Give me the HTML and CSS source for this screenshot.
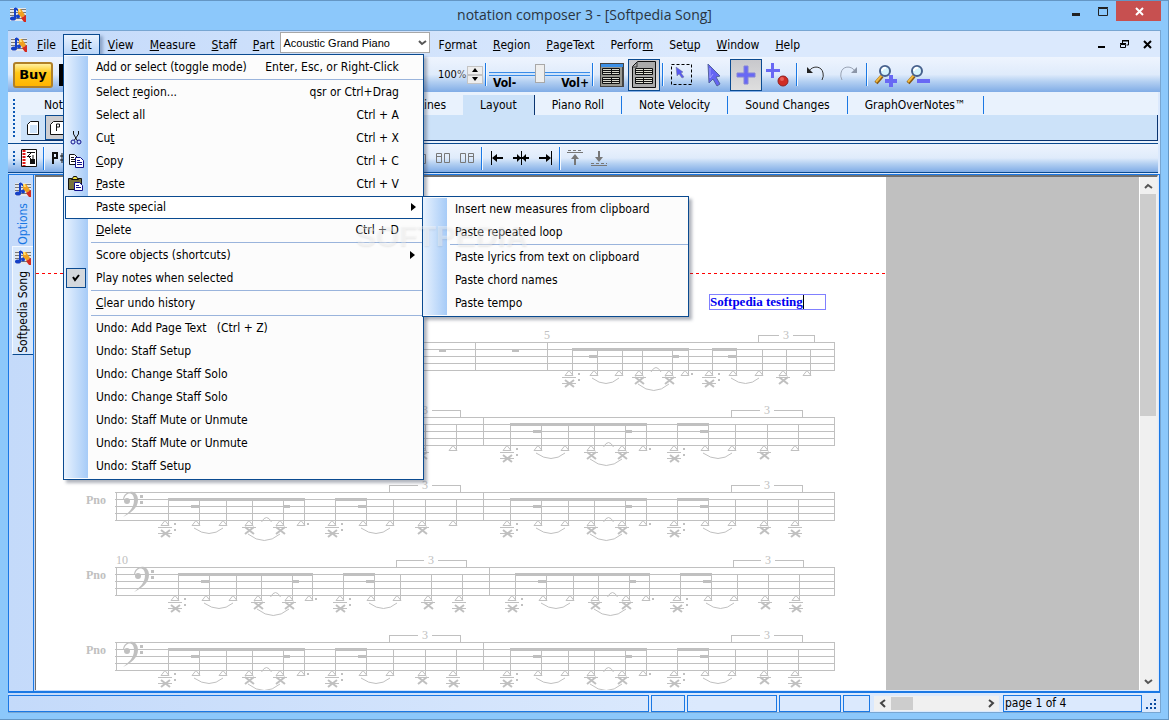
FILE: index.html
```html
<!DOCTYPE html>
<html lang="en">
  <head>
    <meta charset="UTF-8" />
    <meta name="viewport" content="width=device-width, initial-scale=1.0" />
    <title>notation composer 3 - [Softpedia Song]</title>
    <link rel="stylesheet" href="styles.css">
  </head>
  <body>
    <svg class="defs" width="0" height="0" aria-hidden="true">
      <defs>
        <symbol id="app-icon" viewBox="0 0 16 16">
          <rect width="16" height="13" y="1" fill="#e4e6ea" />
          <path d="M0 2.5h16M0 5.5h16M0 8.5h16M0 11.5h16" stroke="#777" />
          <path d="M5 1v10M5 1l4 3v5" stroke="#1440c8" stroke-width="2" fill="none" />
          <ellipse cx="3" cy="11.500" rx="3" ry="2" fill="#1440c8" />
          <ellipse cx="8" cy="9.500" rx="2" ry="2" fill="#1440c8" />
          <path d="M8 2l3 0 4 6-3 3-4-4z" fill="#f0a020" />
          <path d="M8 2l2 0 1 3-2 0z" fill="#ffe070" />
          <path d="M11 11l5-3v7h-2z" fill="#d42a20" />
        </symbol>
        <symbol id="lens" viewBox="0 0 24 24">
          <path d="M2 20l6-7" stroke="#8a5a10" stroke-width="4" />
          <path d="M2 19l6-7" stroke="#f0b840" stroke-width="2" />
          <circle cx="11" cy="8" r="5" fill="#d4f2fc" stroke="#46608c" stroke-width="2" />
          <path d="M8 8a3 3 0 0 1 4-3" stroke="#fff" stroke-width="2" fill="none" />
        </symbol>
      </defs>
    </svg>

    <header class="title-bar">
      <svg class="app-icon" width="16" height="16"><use href="#app-icon" /></svg>
      <h1>notation composer 3 - [Softpedia Song]</h1>
      <div class="window-buttons">
        <button type="button" aria-label="Minimize"><svg width="12" height="12"><path d="M2 8h8v3h-8z" fill="#222" /></svg></button>
        <button type="button" aria-label="Maximize"><svg width="12" height="12"><path d="M1.500 3.500h9v7h-9zM1 2.500h10" fill="none" stroke="#222" /></svg></button>
        <button type="button" class="close" aria-label="Close"><svg width="12" height="12"><path d="M3 3l7 7M10 3l-7 7" stroke="#fff" stroke-width="2" /></svg></button>
      </div>
    </header>

    <div class="window">
      <nav class="menu-bar">
        <svg class="song-icon" width="16" height="16"><use href="#app-icon" /></svg>
        <button type="button" class="menu-title"><u>F</u>ile</button>
        <div class="menu-holder edit-holder">
          <button type="button" class="menu-title open"><u>E</u>dit</button>
          <div class="menu edit-menu">
            <button type="button" class="item"><span>Add or select (toggle mode)</span><kbd>Enter, Esc, or Right-Click</kbd></button>
            <hr />
            <button type="button" class="item"><span>Select <u>r</u>egion...</span><kbd>qsr or Ctrl+Drag</kbd></button>
            <button type="button" class="item"><span>Select all</span><kbd>Ctrl + A</kbd></button>
            <button type="button" class="item">
              <svg width="16" height="16" fill="none" stroke="#111"><path d="M5.500 1v3l4 7M10.500 1v3l-4 6" /><circle cx="5" cy="12" r="2" stroke="#10108c" /><circle cx="11" cy="12" r="2" stroke="#10108c" /></svg>
              <span>Cu<u>t</u></span><kbd>Ctrl + X</kbd>
            </button>
            <button type="button" class="item">
              <svg width="16" height="16" fill="#fff"><path d="M1.500 1.500h5l3 3v7h-8z" stroke="#111" /><path d="M3 4.500h3M3 6.500h5M3 8.500h5" stroke="#111" /><path d="M7.500 4.500h5l3 3v7h-8z" stroke="#10108c" /><path d="M9 7.500h3M9 9.500h5M9 11.500h5" stroke="#10108c" /></svg>
              <span><u>C</u>opy</span><kbd>Ctrl + C</kbd>
            </button>
            <button type="button" class="item">
              <svg width="16" height="16"><path d="M.5 2.500h13v11h-13z" fill="#77733c" stroke="#111" /><path d="M3.500 3.500h7v-1h-1l-1-2h-3l-1 2h-1z" fill="#f0e040" stroke="#111" /><path d="M6.500 6.500h5l3 3v5h-8z" fill="#fff" stroke="#10108c" /><path d="M8 9.500h3M8 11.500h5" stroke="#10108c" /></svg>
              <span><u>P</u>aste</span><kbd>Ctrl + V</kbd>
            </button>
            <div class="menu-holder">
              <button type="button" class="item selected"><span>Paste special</span><i class="arrow"></i></button>
              <div class="menu submenu">
                <button type="button" class="item"><span>Insert new measures from clipboard</span></button>
                <button type="button" class="item"><span>Paste repeated loop</span></button>
                <hr />
                <button type="button" class="item"><span>Paste lyrics from text on clipboard</span></button>
                <button type="button" class="item"><span>Paste chord names</span></button>
                <button type="button" class="item"><span>Paste tempo</span></button>
              </div>
            </div>
            <button type="button" class="item"><span><u>D</u>elete</span><kbd>Ctrl + D</kbd></button>
            <hr />
            <button type="button" class="item"><span>Score objects (shortcuts)</span><i class="arrow"></i></button>
            <button type="button" class="item">
              <svg width="20" height="20"><rect x=".5" y=".5" width="19" height="19" fill="#d4d8dd" stroke="#0a4a90" /><path d="M7 9l2 3 4-5" fill="none" stroke="#000" stroke-width="2" /></svg>
              <span>Play notes when selected</span>
            </button>
            <hr />
            <button type="button" class="item"><span><u>C</u>lear undo history</span></button>
            <hr />
            <button type="button" class="item"><span>Undo: Add Page Text &nbsp; (Ctrl + Z)</span></button>
            <button type="button" class="item"><span>Undo: Staff Setup</span></button>
            <button type="button" class="item"><span>Undo: Change Staff Solo</span></button>
            <button type="button" class="item"><span>Undo: Change Staff Solo</span></button>
            <button type="button" class="item"><span>Undo: Staff Mute or Unmute</span></button>
            <button type="button" class="item"><span>Undo: Staff Mute or Unmute</span></button>
            <button type="button" class="item"><span>Undo: Staff Setup</span></button>
            <div class="watermark">SOFTPEDIA<sup>®</sup></div>
          </div>
        </div>
        <button type="button" class="menu-title"><u>V</u>iew</button>
        <button type="button" class="menu-title"><u>M</u>easure</button>
        <button type="button" class="menu-title"><u>S</u>taff</button>
        <button type="button" class="menu-title"><u>P</u>art</button>
        <div class="part-picker">
          <select aria-label="Part">
            <option>Acoustic Grand Piano</option>
          </select>
          <svg width="9" height="8"><path d="M1 2l3 3 4-3" fill="none" stroke="#555" stroke-width="2" /></svg>
        </div>
        <button type="button" class="menu-title">F<u>o</u>rmat</button>
        <button type="button" class="menu-title"><u>R</u>egion</button>
        <button type="button" class="menu-title"><u>P</u>ageText</button>
        <button type="button" class="menu-title">Perfor<u>m</u></button>
        <button type="button" class="menu-title">Set<u>u</u>p</button>
        <button type="button" class="menu-title"><u>W</u>indow</button>
        <button type="button" class="menu-title"><u>H</u>elp</button>
        <div class="song-buttons">
          <button type="button" aria-label="Minimize song"><svg width="9" height="9"><path d="M1 6h7v2h-7z" /></svg></button>
          <button type="button" aria-label="Restore song"><svg width="9" height="9" fill="none" stroke="#000"><path d="M.5 4.500h5v3h-5zM0 3.500h6M2.500 3v-2h6v4h-2M2 .5h7" /></svg></button>
          <button type="button" aria-label="Close song"><svg width="9" height="9"><path d="M1 1l7 7M8 1l-7 7" stroke="#000" stroke-width="2" /></svg></button>
        </div>
      </nav>

      <div class="toolbar">
        <div class="toolbar-start">
          <button type="button" class="buy">Buy</button>
          <output class="display"></output>
        </div>
        <span class="zoom-level">100<small>%</small></span>
        <div class="spinner">
          <button type="button" aria-label="Zoom up"><svg width="8" height="4"><path d="M1 4l3-4 3 4z" /></svg></button>
          <button type="button" aria-label="Zoom down"><svg width="8" height="4"><path d="M1 0l3 4 3-4z" /></svg></button>
        </div>
        <i class="sep"></i>
        <div class="volume">
          <input type="range" min="0" max="100" value="50" aria-label="Volume" />
          <div class="volume-labels"><span>Vol-</span><span>Vol+</span></div>
        </div>
        <i class="sep"></i>
        <button type="button" class="tool" aria-label="Scroll view"><svg width="24" height="24"><rect width="24" height="24" fill="#444" /><rect x="1" y="1" width="22" height="3" fill="#3b8fe6" /><rect x="1" y="4" width="21" height="19" fill="#989890" /><path d="M2.500 5.500h17v6h-17zM2.500 14.500h17v6h-17z" fill="#d8d8cc" stroke="#111" /><path d="M2 7.500h18M2 9.500h18M2 16.500h18M2 18.500h18M11.500 5v7M11.500 14v7" stroke="#111" /></svg></button>
        <button type="button" class="tool pressed" aria-label="Page view"><svg width="24" height="28"><path d="M.5 5.500l5-5h18v26h-23z" fill="#aaa" stroke="#111" /><path d="M1 6h4v-5" fill="none" stroke="#333" /><path d="M3.500 7.500h17v6h-17zM3.500 16.500h17v6h-17z" fill="#e0e0d4" stroke="#111" /><path d="M3 9.500h18M3 11.500h18M3 18.500h18M3 20.500h18M11.500 7v7M11.500 16v7" stroke="#111" /></svg></button>
        <i class="sep"></i>
        <button type="button" class="tool" aria-label="Select region"><svg width="22" height="22"><rect x=".5" y=".5" width="20" height="20" fill="none" stroke="#000" stroke-dasharray="3 2" /><path d="M5 3l7 5-2 1 3 4-2 1-3-4-2 2z" fill="#5858f0" stroke="#6e7890" stroke-width=".5" /></svg></button>
        <button type="button" class="tool" aria-label="Select"><svg width="16" height="24"><path d="M2 1l12 12-4 1 4 7-3 2-4-7-4 4z" fill="#6464f4" stroke="#5262a0" /><path d="M4 5v10l3-4" fill="none" stroke="#a0a0ff" /></svg></button>
        <button type="button" class="tool pressed" aria-label="Add"><svg width="20" height="20"><path d="M8 1h4v7h7v4h-7v7h-4v-7h-7v-4h7z" fill="#6868f4" stroke="#8484d8" /></svg></button>
        <button type="button" class="tool" aria-label="Add and record"><svg width="24" height="24"><path d="M5 0h3v6h6v3h-6v6h-3v-6h-6v-3h6z" fill="#6868f4" /><circle cx="17" cy="18" r="5" fill="#d02c24" stroke="#902020" /><circle cx="16" cy="16" r="2" fill="#e86058" /></svg></button>
        <i class="sep"></i>
        <button type="button" class="tool" aria-label="Undo"><svg width="20" height="20" fill="none" stroke="#333"><path d="M3 6c4-6 13-5 14 2q1 3-1 7" /><path d="M1 2v6h6z" fill="#222" stroke="none" /></svg></button>
        <button type="button" class="tool" aria-label="Redo"><svg width="20" height="20" fill="none" stroke="#99a3b4"><path d="M17 6c-4-6-13-5-14 2q-1 3 1 7" /><path d="M19 2v6h-6z" fill="#8c96a8" stroke="none" /></svg></button>
        <i class="sep"></i>
        <button type="button" class="tool" aria-label="Zoom in"><svg width="24" height="24"><use href="#lens" /><path d="M15 12h4v4h4v4h-4v4h-4v-4h-4v-4h4z" fill="#6868f4" /></svg></button>
        <button type="button" class="tool" aria-label="Zoom out"><svg width="24" height="24"><use href="#lens" /><path d="M11 16h13v4h-13z" fill="#6868f4" /></svg></button>
      </div>

      <div class="palette">
        <i class="grip"></i>
        <div class="palette-body">
          <div class="tabs">
            <div class="tabs-start">
              <button type="button" class="tab">Notes</button>
              <button type="button" class="tab">Lines</button>
            </div>
            <button type="button" class="tab active">Layout</button>
            <button type="button" class="tab">Piano Roll</button>
            <button type="button" class="tab">Note Velocity</button>
            <button type="button" class="tab">Sound Changes</button>
            <button type="button" class="tab">GraphOverNotes™</button>
          </div>
          <div class="tab-panel">
            <button type="button" class="page-tool" aria-label="Page layout"><svg width="14" height="16"><path d="M1.500 4.500l3-3h8v13h-11z" fill="#fff" stroke="#111" /><path d="M4 5h7v8h-7z" fill="#cfe4fa" /></svg></button>
            <button type="button" class="page-tool pressed" aria-label="Page text"><svg width="14" height="16"><path d="M.5 4.500l3-3h10v13h-13z" fill="#fff" stroke="#111" /><path d="M6.500 11v-7h3v3h-3" fill="none" stroke="#111" /></svg></button>
          </div>
        </div>
      </div>

      <div class="toolbar format-bar">
        <i class="grip"></i>
        <div class="format-start">
          <button type="button" aria-label="Score setup"><svg width="16" height="18"><path d="M.5.5h15v17h-15z" fill="#fff" stroke="#111" /><path d="M3 1v16" stroke="#e01818" stroke-width="3" stroke-dasharray="2 1" /><path d="M6 3.500h8M6 7.500h4M12 6v4M7 7l3-3M7 7l3 3" stroke="#111" fill="none" /><path d="M9 10h5v5h-5z" fill="#111" /></svg></button>
          <i class="sep"></i>
          <button type="button" aria-label="Sharps"><svg width="16" height="14" fill="none" stroke="#111"><path d="M2 13v-11h4v5h-4" stroke-width="2" /><path d="M9 5h6M9 9h6M11 2v10M14 2v10" /></svg></button>
        </div>
        <button type="button" class="small-tool" aria-label="Join"><svg width="16" height="14" fill="none" stroke="#777"><path d="M1.500 1.500h5v11h-5zM9.500 3.500h5v9h-5z" /></svg></button>
        <button type="button" class="small-tool" aria-label="Break left"><svg width="16" height="14" fill="none" stroke="#777"><path d="M1.500 2.500h5v9h-5zM1 5.500h6M9.500 2.500h5v9h-5z" /></svg></button>
        <button type="button" class="small-tool" aria-label="Break right"><svg width="16" height="14" fill="none" stroke="#777"><path d="M1.500 2.500h5v9h-5zM9.500 2.500h5v9h-5zM9 5.500h6" /></svg></button>
        <i class="sep"></i>
        <button type="button" class="small-tool" aria-label="Move left"><svg width="16" height="16"><path d="M2.500 1v14" stroke="#000" /><path d="M4 8h10" stroke="#000" stroke-width="2" /><path d="M3 8l5-4v8z" /></svg></button>
        <button type="button" class="small-tool" aria-label="Center"><svg width="16" height="16"><path d="M0 8h16" stroke="#000" stroke-width="2" /><path d="M8.500 1v14" stroke="#000" /><path d="M8 8l-4-4v8zM9 8l4-4v8z" /></svg></button>
        <button type="button" class="small-tool" aria-label="Move right"><svg width="16" height="16"><path d="M14.500 1v14" stroke="#000" /><path d="M2 8h10" stroke="#000" stroke-width="2" /><path d="M14 8l-5-4v8z" /></svg></button>
        <i class="sep"></i>
        <button type="button" class="small-tool" aria-label="Move up"><svg width="16" height="16" fill="#777" stroke="#777"><path d="M8 6v9" stroke-width="2" /><path d="M8 4l4 5h-8z" stroke="none" /><path d="M0 2.500h16" /><path d="M1 .5h14" stroke-dasharray="3 2" /></svg></button>
        <button type="button" class="small-tool" aria-label="Move down"><svg width="16" height="16" fill="#777" stroke="#777"><path d="M8 1v9" stroke-width="2" /><path d="M8 12l4-5h-8z" stroke="none" /><path d="M0 15.500h16" /><path d="M0 13.500h16" stroke-dasharray="3 2" /></svg></button>
      </div>

      <main class="workspace">
        <div class="side-tabs">
          <button type="button" class="side-tab"><svg width="16" height="16"><use href="#app-icon" /></svg><span>Options</span></button>
          <button type="button" class="side-tab active"><svg width="16" height="16"><use href="#app-icon" /></svg><span>Softpedia Song</span></button>
        </div>
        <div class="score-view">
          <div class="page">
            <svg id="score" width="850" height="560"></svg>
            <div class="page-text">
              <input type="text" value="Softpedia testing" aria-label="Page text" />
              <i class="caret"></i>
            </div>
          </div>
          <div class="v-scroll">
            <button type="button" aria-label="Scroll up"><svg width="9" height="8"><path d="M1 6l3-3 4 3" fill="none" stroke="#555" stroke-width="2" /></svg></button>
            <i class="thumb"></i>
            <button type="button" aria-label="Scroll down"><svg width="9" height="8"><path d="M1 2l3 3 4-3" fill="none" stroke="#555" stroke-width="2" /></svg></button>
          </div>
        </div>
      </main>

      <footer class="status-bar">
        <div class="cell message"></div>
        <div class="cell cell-s"></div>
        <div class="cell cell-l"></div>
        <div class="cell cell-m"></div>
        <div class="cell cell-xs"></div>
        <div class="h-scroll">
          <button type="button" aria-label="Previous page"><svg width="8" height="9"><path d="M6 1l-4 3 4 4" fill="none" stroke="#444" stroke-width="2" /></svg></button>
          <i class="thumb"></i>
          <button type="button" aria-label="Next page"><svg width="8" height="9"><path d="M2 1l4 3-4 4" fill="none" stroke="#444" stroke-width="2" /></svg></button>
        </div>
        <div class="cell page-number">page 1 of 4</div>
        <svg class="size-grip" width="12" height="12" fill="#0a4aa0"><path d="M8 0h2v2h-2zM4 4h2v2h-2zM8 4h2v2h-2zM0 8h2v2h-2zM4 8h2v2h-2zM8 8h2v2h-2z" /></svg>
      </footer>
    </div>
    <script src="score.js"></script>
  </body>
</html>
```
FILE: styles.css
```css
* {
  box-sizing: border-box;
}

body {
  margin: 0;
  height: 100vh;
  display: flex;
  flex-direction: column;
  padding: 0 7px 6px 8px;
  overflow: hidden;
  background: #8cc8fb;
  border: 1px solid #6496c4;
  border-width: 1px 1px 1px 0;
  font-family: "DejaVu Sans Condensed", "DejaVu Sans", sans-serif;
  font-size: 12px;
  line-height: 16px;
  color: #000;
}

button {
  margin: 0;
  padding: 0;
  border: none;
  background: none;
  font: inherit;
  color: inherit;
  text-align: left;
  display: flex;
  align-items: center;
  justify-content: center;
}

svg {
  flex: none;
  display: block;
}

.defs {
  position: absolute;
}

/* title bar */
.title-bar {
  flex: none;
  height: 29px;
  display: grid;
  grid-template-columns: 1fr auto 1fr;
}

.app-icon {
  margin: 6px 2px;
}

.title-bar h1 {
  margin: 0;
  font: 14px/28px "Open Sans", sans-serif;
  color: #2a3440;
}

.window-buttons {
  display: flex;
  justify-content: flex-end;
  height: 20px;
}

.window-buttons button {
  width: 27px;
}

.window-buttons .close {
  width: 45px;
  background: #c75050;
}

.window {
  flex: 1;
  min-height: 0;
  display: flex;
  flex-direction: column;
  border: 1px solid #78a6d2;
  border-left: none;
  background: linear-gradient(to right, #c4dafa, #dbe9fd 60%);
}

/* menu bar */
.menu-bar {
  flex: none;
  height: 26px;
  display: flex;
  align-items: center;
  padding-top: 1px;
}

.song-icon {
  margin: 0 2px 0 3px;
}

.menu-title {
  height: 22px;
  padding: 0 8px;
}

.menu-title.open {
  padding: 0 7px;
  border: 1px solid #0a4a90;
  border-bottom: none;
  background: linear-gradient(#e8f2fe, #b4d2f8);
  box-shadow: 3px 2px 3px #8fa6c8;
}

.menu-holder {
  position: relative;
}

.edit-holder {
  margin-left: -1px;
}

.part-picker {
  display: grid;
  align-items: center;
  width: 150px;
  height: 21px;
  margin-left: -2px;
  margin-bottom: 4px;
}

.part-picker select,
.part-picker svg {
  grid-area: 1 / 1;
}

.part-picker select {
  appearance: none;
  width: 100%;
  height: 21px;
  padding: 0 2px;
  border: 1px solid #a8a8a8;
  border-radius: 0;
  background: #fff;
  font: 11px "Liberation Sans", sans-serif;
  color: #000;
}

.part-picker svg {
  justify-self: end;
  margin-right: 3px;
}

.song-buttons {
  display: flex;
  gap: 14px;
  margin-left: auto;
  padding-right: 8px;
}

/* drop down menus */
.menu {
  position: absolute;
  z-index: 10;
  padding: 1px 0;
  border: 1px solid #0a4a90;
  background: linear-gradient(to right, #e8f2fe, #a6cbf7) no-repeat 0 1px / 24px calc(100% - 2px) #fcfcfc;
  box-shadow: 3px 3px 3px rgba(60, 70, 90, 0.4);
}

.edit-menu {
  top: 20px;
  left: 0;
  width: 361px;
}

.submenu {
  top: 0;
  left: calc(100% - 1px);
  width: 267px;
}

.menu hr {
  height: 1px;
  margin: 0 0 1px 27px;
  border: none;
  background: #9ab4dc;
}

.item {
  display: grid;
  grid-template-columns: 24px 1fr auto;
  width: 100%;
  height: 23px;
  padding-right: 24px;
}

.item svg {
  grid-column: 1;
  grid-row: 1;
  justify-self: center;
}

.item span {
  grid-column: 2;
  grid-row: 1;
  padding-left: 8px;
  white-space: nowrap;
}

.item kbd {
  grid-column: 3;
  grid-row: 1;
  font: inherit;
}

.submenu .item {
  padding-right: 0;
}

.item.selected {
  border: 1px solid #0a4a90;
  background: #fff;
  width: calc(100% - 1px);
  margin-left: 1px;
  padding-right: 22px;
  grid-template-columns: 22px 1fr auto;
}

.arrow {
  grid-column: 3;
  grid-row: 1;
  width: 0;
  margin: 0 -16px 0 11px;
  border: 4px solid transparent;
  border-left: 5px solid #000;
  border-right: none;
}

.watermark {
  position: absolute;
  z-index: 11;
  top: 160px;
  left: 292px;
  font: bold 30px/34px "Liberation Sans", sans-serif;
  color: rgba(255, 255, 255, 0.4);
  text-shadow: 0 1px 2px rgba(0, 0, 0, 0.08);
  pointer-events: none;
}

.watermark sup {
  font-size: 9px;
}

/* toolbars */
.toolbar {
  flex: none;
  height: 35px;
  display: flex;
  align-items: center;
  background: linear-gradient(#eef4fe, #dfebfb 50%, #b4d0f2 70%, #80ace6);
}

.toolbar-start {
  display: flex;
  align-items: center;
  gap: 6px;
  width: 430px;
  padding-left: 5px;
}

.buy {
  width: 40px;
  height: 26px;
  border: 2px solid #b08028;
  border-radius: 3px;
  background: linear-gradient(#fff0a0, #ffc818 40%, #ffb400);
  font: bold 13px/16px "DejaVu Sans", sans-serif;
}

.display {
  width: 120px;
  height: 22px;
  background: #000;
}

.zoom-level {
  width: 29px;
  font-size: 11px;
}

.zoom-level small {
  font-size: 11px;
  color: #555;
}

.spinner button {
  width: 16px;
  height: 9px;
  border: 1px solid #c4c4c4;
  background: #eee;
}

.sep {
  flex: none;
  width: 6px;
  height: 23px;
  background: linear-gradient(to right, transparent 2px, #1a78e4 2px 3px, #f4f9ff 3px 4px, transparent 4px);
}

.volume {
  display: grid;
  width: 101px;
  height: 32px;
}

.volume input,
.volume-labels {
  grid-area: 1 / 1;
}

.volume input {
  appearance: none;
  width: 100%;
  height: 20px;
  margin: 5px 0 0;
  background: linear-gradient(#3a8ce8, #3a8ce8 1px, #cfe4fb 1px, #cfe4fb 3px, #3a8ce8 3px) no-repeat center / 100% 4px;
}

.volume input::-webkit-slider-thumb {
  appearance: none;
  width: 10px;
  height: 19px;
  border: 1px solid #a8a8a8;
  border-radius: 0;
  background: #eee;
}

.volume-labels {
  display: flex;
  justify-content: space-between;
  align-items: flex-end;
  padding: 0 1px 0 4px;
  font-weight: bold;
  pointer-events: none;
}

.tool {
  width: 32px;
  height: 32px;
}

.tool.pressed {
  border: 1px solid #0a4a90;
  background: linear-gradient(#c8c8cc, #dedede);
}

/* palette with tabs */
.palette {
  flex: none;
  display: flex;
  height: 52px;
  margin-right: 2px;
  padding: 3px 0 2px;
  background: #e9f2fd;
  border-bottom: 1px solid #0a4a90;
}

.grip {
  width: 2px;
  margin: 4px 6px 4px 5px;
  background: repeating-linear-gradient(#0c58b4 0 2px, transparent 2px 4px);
}

.palette-body {
  flex: 1;
  display: flex;
  flex-direction: column;
}

.tabs {
  display: flex;
  height: 20px;
}

.tabs-start {
  display: flex;
  justify-content: space-between;
  width: 442px;
  padding-left: 6px;
}

.tab {
  padding: 0 17px;
  height: 20px;
  border: solid transparent;
  border-width: 0 1px 0 0;
  border-image: linear-gradient(transparent 2px, #1a78e4 2px 18px, transparent 18px) 1;
}

.tabs-start .tab {
  border: none;
}

.tab.active {
  background: #cce2f9;
  border-image: none;
  border-right: 1px solid #0a3470;
}

.tab-panel {
  flex: 1;
  display: flex;
  background: #cce2f9;
  border: 1px solid #0a3470;
  border-width: 0 1px 1px 0;
}

.page-tool {
  width: 24px;
  height: 25px;
}

.page-tool.pressed {
  border: 1px solid #0a4a90;
  background: #cdcdd0;
}

.format-bar {
  height: 29px;
  margin-right: 2px;
  border-bottom: 1px solid #0a4a90;
}

.format-bar .grip {
  height: 14px;
}

.format-start {
  display: flex;
  align-items: center;
  gap: 4px;
  width: 386px;
}

.small-tool {
  width: 24px;
  height: 24px;
}

/* workspace */
.workspace {
  flex: 1;
  min-height: 0;
  display: flex;
  margin-top: 1px;
  border: 1px solid #1a78e4;
  border-bottom-width: 2px;
}

.side-tabs {
  width: 25px;
  padding: 4px 0 0 3px;
  border-right: 1px solid #1a78e4;
}

.side-tab {
  flex-direction: column;
  gap: 5px;
  width: 21px;
  padding: 3px 0 1px;
  color: #1a78e4;
}

.side-tab.active {
  background: #d8e8fc;
  border: 1px solid #f4f9ff;
  border-bottom-color: #0a4a90;
  border-right: none;
  color: #000;
}

.side-tab span {
  writing-mode: vertical-rl;
  transform: rotate(180deg);
}

.score-view {
  flex: 1;
  display: flex;
  min-width: 0;
  margin: 0 1px 1px;
  border: 2px solid #707070;
  border-width: 2px 1px 0 1px;
  border-right-color: #eee;
  background: #c0c0c0;
}

.page {
  position: relative;
  width: 850px;
  overflow: hidden;
  background: #fff;
}

.page-text {
  position: absolute;
  top: 117px;
  left: 673px;
}

.page-text input {
  display: block;
  width: 117px;
  height: 16px;
  padding: 0;
  border: 1px solid #8080ff;
  background: #fff;
  font: bold 13px/14px "Liberation Serif", serif;
  color: #0000f0;
}

.caret {
  position: absolute;
  top: 1px;
  left: 94px;
  width: 1px;
  height: 14px;
  background: #000;
}

.v-scroll {
  display: flex;
  flex-direction: column;
  width: 18px;
  margin-left: auto;
  border-left: 1px solid #fff;
  background: #f0f0f0;
}

.v-scroll button {
  height: 17px;
}

.v-scroll .thumb {
  height: 222px;
  margin-right: 1px;
  margin-bottom: auto;
  background: #cdcdcd;
}

/* status bar */
.status-bar {
  flex: none;
  display: flex;
  gap: 2px;
  height: 19px;
  padding: 2px 2px 0 0;
}

.cell {
  height: 17px;
  border: 1px solid #1a78e4;
}

.message {
  flex: 1;
}

.cell-s {
  width: 34px;
}

.cell-l {
  width: 90px;
}

.cell-m {
  width: 62px;
}

.cell-xs {
  width: 27px;
}

.h-scroll {
  display: flex;
  width: 125px;
  margin: 1px 2px;
  background: #f0f0f0;
}

.h-scroll button {
  width: 17px;
}

.h-scroll .thumb {
  width: 22px;
  margin: 1px auto 1px 0;
  background: #cdcdcd;
}

.page-number {
  width: 139px;
  padding-left: 1px;
  line-height: 15px;
}

.size-grip {
  margin: 4px 0 0 2px;
}

/* score */
#score {
  stroke: #c0c0c0;
  fill: none;
}

#score .beam,
#score .dot {
  fill: #c0c0c0;
  stroke: none;
}

#score .sharp {
  shape-rendering: crispEdges;
}

#score .cross {
  stroke-width: 2;
}

#score .margin {
  stroke: #f00;
  stroke-dasharray: 3 3;
}

#score text {
  fill: #c0c0c0;
  stroke: none;
  font-family: "Liberation Serif", serif;
  font-size: 12px;
}

#score .part-name {
  font-weight: bold;
}
```
FILE: score.js
```javascript
const score = document.getElementById("score");
const LINE = 7;
const LEFT = 80;
const RIGHT = 798;

// distance of each stem from the first stem of its measure
const TIGHT = [0, 25, 50, 70, 100, 116, 140, 164, 190, 214, 238];
const MEDIUM = [0, 31, 58, 83, 114, 134, 165, 196, 222, 253, 284];
const WIDE = [0, 31, 58, 84, 115, 136, 167, 198, 225, 257, 288];

const systems = [
  { top: 165, clef: 87, bars: [439, 511], rests: [406, 479], number: [508, "5"],
    measures: [{ x: 536, stems: TIGHT }] },
  { top: 240, clef: 87, bars: [447],
    measures: [{ x: 132, stems: WIDE }, { x: 474, stems: WIDE }] },
  { top: 315, clef: 87, bars: [447],
    measures: [{ x: 132, stems: WIDE }, { x: 474, stems: WIDE, low: true }] },
  { top: 390, clef: 98, bars: [453], number: [80, "10"],
    measures: [{ x: 142, stems: MEDIUM, low: true }, { x: 479, stems: MEDIUM, low: true }] },
  { top: 465, clef: 87, bars: [447],
    measures: [{ x: 132, stems: WIDE, low: true }, { x: 474, stems: WIDE, low: true }] },
];

let out = "";

function path(d, name) {
  out += `<path class="${name || ""}" d="${d}" />`;
}

function rect(x, y, w, h) {
  out += `<rect class="beam" x="${x}" y="${y}" width="${w}" height="${h}" />`;
}

function text(x, y, value, name) {
  out += `<text class="${name || ""}" x="${x}" y="${y}">${value}</text>`;
}

function cross(x, y) {
  path(`M${x - 4} ${y - 3}l9 7M${x + 5} ${y - 3}l-9 7`, "cross");
}

function ledger(x, y) {
  path(`M${x - 7} ${y + 0.5}h14`, "sharp");
}

function drawMeasure(measure, top) {
  const base = top + 28;
  const xs = measure.stems.map((s) => measure.x + s);

  xs.forEach((x, i) => {
    const head = x - 3;
    path(`M${x + 0.5} ${top + LINE}V${base + 5}`, "sharp");
    path(`M${head - 4} ${base + 5.5}h8l-4 -5z`);
    if (i === 0 || i === 6 || (i === 10 && measure.low)) {
      ledger(head, base + 7);
      ledger(head, base + 13);
      cross(head, base + 13);
    }
    if (i === 3 || i === 4 || i === 9) {
      ledger(head, base + 7);
      cross(head, base + 10);
    }
    if (i === 0 || i === 6) {
      rect(x + 6, base + 3, 2, 2);
      rect(x + 6, base + 9, 2, 2);
    }
    if (i === 5) {
      rect(x + 3, base + 3, 2, 2);
    }
  });

  // beams
  rect(xs[0], top + 6, xs[5] - xs[0] + 1, 3);
  rect(xs[6], top + 6, xs[7] - xs[6] + 1, 3);
  rect(xs[1] - 8, top + 13, 8, 3);
  rect(xs[4], top + 13, 7, 3);
  rect(xs[7] - 8, top + 13, 8, 3);

  // ties
  [[1, 2], [7, 8]].forEach(([a, b]) => {
    path(`M${xs[a] - 5} ${base + 8}Q${(xs[a] + xs[b]) / 2 - 3} ${base + 19} ${xs[b] - 3} ${base + 8}`);
  });
  const mid = (xs[3] + xs[4]) / 2 - 1;
  path(`M${xs[3] - 4} ${base + 14}Q${mid - 2} ${base + 27} ${xs[4] - 3} ${base + 14}`);
  path(`M${mid - 5} ${base + 2}q5 -9 10 0`);

  // triplet bracket
  const l = xs[8] - 4;
  const r = xs[10] + 4;
  const c = Math.round((l + r) / 2);
  path(`M${l + 0.5} ${top}v-6.500H${c - 7}M${c + 7} ${top - 6.5}H${r + 0.5}v6.500`, "sharp");
  text(c - 3, top - 3, "3");
}

function drawClef(x, top) {
  out += `<circle class="dot" cx="${x + 4}" cy="${top + 9}" r="3" />`;
  path(`M${x} ${top + 8}c0 -10 15 -12 15 0c0 8 -7 13 -15 17c6 -5 11 -9 11 -17c0 -9 -9 -8 -10 0z`, "dot");
  rect(x + 17, top + 3, 3, 3);
  rect(x + 17, top + 9, 3, 3);
}

path("M0 96.500H850", "sharp margin");

systems.forEach((system) => {
  const top = system.top;
  for (let i = 0; i < 5; i++) {
    path(`M${LEFT - 1} ${top + i * LINE + 0.5}H${RIGHT + 1}`, "sharp");
  }
  [LEFT, ...system.bars, RIGHT].forEach((x) => {
    path(`M${x + 0.5} ${top}v29`, "sharp");
  });
  (system.rests || []).forEach((x) => rect(x - 3, top + 8, 7, 2));
  if (system.number) {
    text(system.number[0], top - 3, system.number[1]);
  }
  text(50, top + 12, "Pno", "part-name");
  drawClef(system.clef, top);
  system.measures.forEach((measure) => drawMeasure(measure, top));
});

score.innerHTML = out;
```
